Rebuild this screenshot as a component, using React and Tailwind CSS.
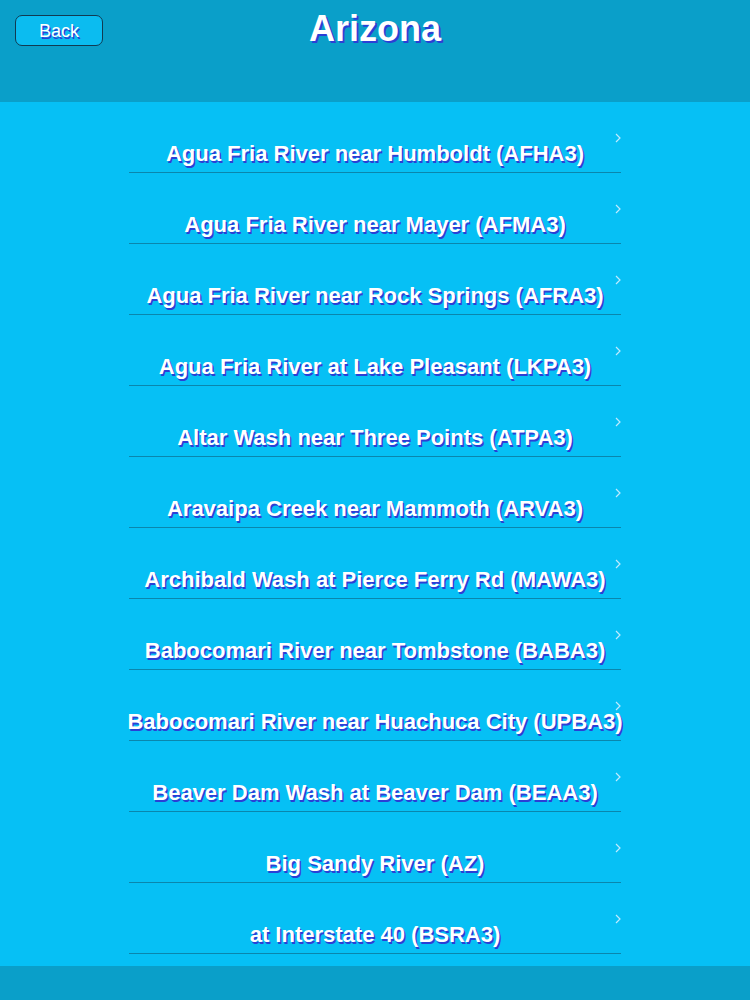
const stations = [
  'Agua Fria River near Humboldt (AFHA3)',
  'Agua Fria River near Mayer (AFMA3)',
  'Agua Fria River near Rock Springs (AFRA3)',
  'Agua Fria River at Lake Pleasant (LKPA3)',
  'Altar Wash near Three Points (ATPA3)',
  'Aravaipa Creek near Mammoth (ARVA3)',
  'Archibald Wash at Pierce Ferry Rd (MAWA3)',
  'Babocomari River near Tombstone (BABA3)',
  'Babocomari River near Huachuca City (UPBA3)',
  'Beaver Dam Wash at Beaver Dam (BEAA3)',
  'Big Sandy River (AZ)',
  'at Interstate 40 (BSRA3)',
]

const shadow = '[text-shadow:1.5px_1.5px_0_#2a3fd6]'

function Row({ label }) {
  return (
    <li className="relative flex h-[71px] items-end justify-center border-b border-[#0a86ad] pb-[5px]">
      <span className={`whitespace-nowrap text-[22px] font-bold leading-[26px] text-white ${shadow}`}>
        {label}
      </span>
      <svg
        className="absolute right-[0px] top-[31px]"
        width="6"
        height="10"
        viewBox="0 0 6 10"
        fill="none"
        stroke="#bfeaff"
        strokeWidth="1.2"
      >
        <path d="M1 1l4 4-4 4" />
      </svg>
    </li>
  )
}

export default function App() {
  return (
    <div className="flex h-[1000px] w-[750px] flex-col overflow-hidden bg-[#06c0f5] font-['Liberation_Sans',Arial,sans-serif]">
      <header className="relative h-[102px] shrink-0 bg-[#0a9fc9]">
        <button
          type="button"
          className={`absolute left-[15px] top-[15px] h-[31px] w-[88px] rounded-[7px] border-[1.5px] border-[#113a52] bg-[#0bbcf0] text-[18px] leading-none text-white ${shadow}`}
        >
          Back
        </button>
        <h1 className="pt-[8px] text-center text-[36px] font-bold leading-[42px] text-white [text-shadow:2px_2px_0_#2a3fd6]">
          Arizona
        </h1>
      </header>

      <ul className="mx-auto w-[492px] flex-1">
        {stations.map((s) => (
          <Row key={s} label={s} />
        ))}
      </ul>

      <footer className="h-[34px] shrink-0 bg-[#0a9fc9]" />
    </div>
  )
}
